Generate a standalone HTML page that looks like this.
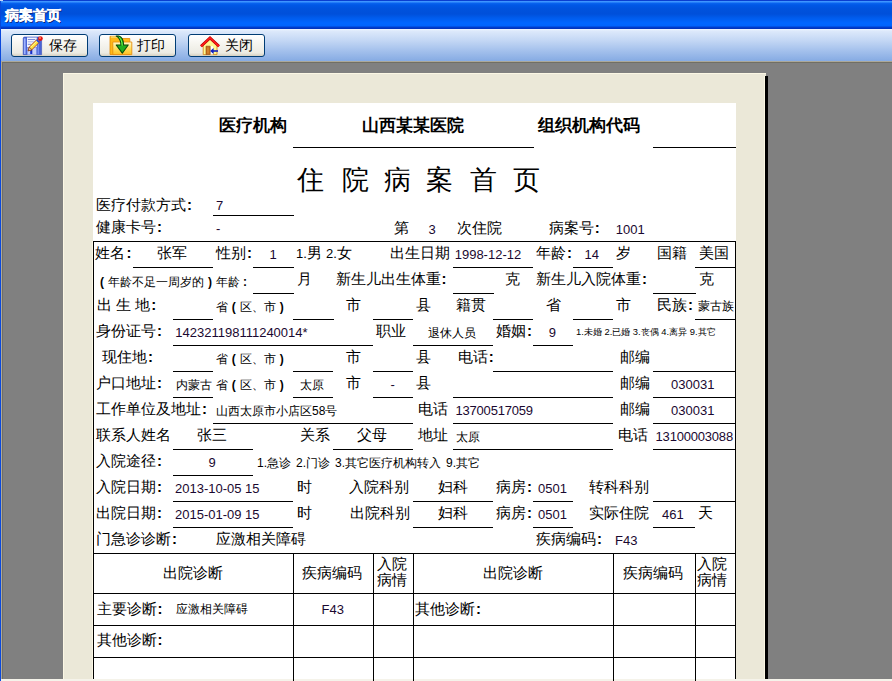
<!DOCTYPE html>
<html><head><meta charset="utf-8"><title>病案首页</title>
<style>
html,body{margin:0;padding:0;}
body{width:892px;height:681px;overflow:hidden;position:relative;background:#808080;font-family:"Liberation Sans",sans-serif;}
.a{position:absolute;}
.t{position:absolute;white-space:nowrap;font-family:"Liberation Sans",sans-serif;}
.hl{position:absolute;height:1px;background:#000;}
.vl{position:absolute;width:1px;background:#000;}
.c{font-family:"Liberation Sans",sans-serif;font-weight:bold;}
.p{display:inline-block;width:1em;text-align:center;font-family:"Liberation Sans",sans-serif;font-weight:bold;}
#title{left:0;top:0;width:892px;height:29px;background:linear-gradient(to bottom,#0a3ed0 0px,#0a3ed0 1px,#3d95ff 1px,#3d95ff 2px,#0a64f0 3px,#0058e6 5px,#0052dc 9px,#0050da 14px,#005ced 18px,#0066ff 23px,#0064fc 26px,#0040d0 27px,#0030b8 29px);}
#ttext{left:5px;top:9px;color:#fff;font-size:13.6px;line-height:13.6px;font-weight:bold;-webkit-text-stroke:0.35px #fff;text-shadow:1px 1px 0 #0a1e6e;}
#tool{left:0;top:29px;width:892px;height:32px;background:linear-gradient(to bottom,#f0f6ff 0px,#dde9fb 2px,#c2d6f4 12px,#a3c0ec 22px,#86abe3 32px);}
.btn{position:absolute;top:34px;width:75px;height:21px;border:1px solid #003c74;border-radius:3px;background:linear-gradient(to bottom,#ffffff 0%,#f6f5f0 40%,#ecebe3 85%,#d6d0c0 100%);}
.btxt{position:absolute;top:38px;font-size:14px;line-height:14px;color:#000;white-space:nowrap;}
</style></head><body>
<div class="a" id="title"></div>
<div class="a" style="left:0;top:0;width:3px;height:1px;background:#c4d6f6"></div>
<div class="a" style="left:0;top:0;width:1px;height:2px;background:#c4d6f6"></div>
<div class="a" style="left:0;top:1px;width:1px;height:28px;background:#0848d8"></div>
<div class="a" id="ttext">病案首页</div>
<div class="a" id="tool"></div>
<div class="a" style="left:0;top:29px;width:1px;height:652px;background:#0a48dc"></div>
<div class="a" style="left:1px;top:61px;width:891px;height:1px;background:#aca899"></div>
<div class="a" style="left:1px;top:61px;width:1px;height:620px;background:#aca899"></div>
<div class="a" style="left:2px;top:62px;width:890px;height:1px;background:#716f64"></div>
<div class="a" style="left:2px;top:62px;width:1px;height:617px;background:#716f64"></div>
<div class="a" style="left:1px;top:679px;width:891px;height:2px;background:#f5f3ea"></div>
<div class="btn" style="left:11px"></div>
<div class="btn" style="left:99px"></div>
<div class="btn" style="left:188px"></div>
<svg class="a" style="left:22px;top:35px" width="22" height="22" viewBox="0 0 22 22">
<path d="M1.2 3.4 Q1.2 2 2.6 2 L17.6 2 L19.6 4 L19.6 19.7 L1.2 19.7 Z" fill="#4a64d4" stroke="#3a50b8" stroke-width=".6"/>
<rect x="2" y="3.4" width="1.6" height="15.6" fill="#9cb2ff"/>
<rect x="15.6" y="5" width="1.3" height="14.2" fill="#7a92f0"/>
<rect x="5" y="2.5" width="9.8" height="9.6" fill="#f2f4ff"/>
<rect x="5.8" y="4" width="7.5" height="1" fill="#7c8cd8"/>
<rect x="5.8" y="6.3" width="6" height="1" fill="#a8b4e4"/>
<rect x="5.8" y="8.8" width="3.5" height="1" fill="#7c8cd8"/>
<rect x="5.4" y="12.4" width="9" height="7.3" fill="#c4d0f8"/>
<rect x="8.2" y="14.8" width="2.1" height="4.2" fill="#1830c8"/>
<path d="M6.2 15.8 L7.3 12.1 L14.9 4.5 L17.5 7.1 L9.9 14.7 Z" fill="#ffe640" stroke="#b03a10" stroke-width=".9" stroke-linejoin="round"/>
<path d="M8.3 12.6 L15.4 5.5" stroke="#fff6a8" stroke-width=".9"/>
<path d="M6.2 15.8 L7.3 12.1 L9.9 14.7 Z" fill="#f4d8a8" stroke="#7a3410" stroke-width=".7" stroke-linejoin="round"/>
<path d="M14.6 4.9 L17.1 7.4" stroke="#2848d8" stroke-width="1.5"/>
<circle cx="18.4" cy="3.6" r="2.4" fill="#e41414"/>
<circle cx="18" cy="3" r=".9" fill="#ff9868"/>
</svg><svg class="a" style="left:108px;top:35px" width="26" height="22" viewBox="0 0 26 22">
<defs><linearGradient id="ff" x1="0" y1="0" x2="0" y2="1"><stop offset="0" stop-color="#fffbd0"/><stop offset=".5" stop-color="#ffe060"/><stop offset="1" stop-color="#ffc020"/></linearGradient></defs>
<path d="M2 1.3 L11.5 1.3 L13.5 3.5 L21.8 3.5 L21.8 19.5 L2 19.5 Z" fill="#ffb818" stroke="#e08808" stroke-width=".8"/>
<path d="M2.8 2 L10.5 2 L12 3.8" stroke="#fff0a0" stroke-width="1" fill="none"/>
<path d="M4.8 7 L23.8 7 L23.8 19.6 L4.8 19.6 Z" fill="url(#ff)" stroke="#e89010" stroke-width=".9"/>
<path d="M8.2 1 Q12.8 3.2 13 10 L8.2 10 L14.3 18.2 L20.2 10 L15.6 10 Q15.4 2 10.6 1 Z" fill="#20b020" stroke="#0a4a0a" stroke-width="1.1" stroke-linejoin="round"/>
<path d="M10.8 2 Q13.8 4 14.2 10.5" stroke="#70ff50" stroke-width="1" fill="none"/>
</svg><svg class="a" style="left:196px;top:34px" width="28" height="24" viewBox="0 0 28 24">
<path d="M7.2 11 L7.2 20.6 L21 20.6 L21 11 L14 5 Z" fill="#fff890" stroke="#d88a20" stroke-width=".9"/>
<rect x="10.2" y="12.2" width="6.8" height="8.3" fill="#fff"/>
<path d="M10 12.2 L14.2 12.2 L14.2 20.5 L10 20.5 Z" fill="#c8701a" stroke="#8a4a10" stroke-width=".6"/>
<path d="M12 13.5 L12 19.5" stroke="#e8a050" stroke-width=".7"/>
<path d="M5 12.3 L14 3.9 L23 12.3" fill="none" stroke="#b00000" stroke-width="2.8" stroke-linejoin="miter" stroke-linecap="butt"/>
<path d="M5 12.3 L14 3.9 L23 12.3" fill="none" stroke="#ff1a1a" stroke-width="1.7" stroke-linejoin="miter" stroke-linecap="butt"/>
<path d="M22 17 L17 17" stroke="#1020c0" stroke-width="1.6"/>
<path d="M14.2 17 L17.6 14 L17.6 20 Z" fill="#1020c0"/>
</svg>
<div class="btxt" style="left:49px">保存</div>
<div class="btxt" style="left:137px">打印</div>
<div class="btxt" style="left:225px">关闭</div>
<!-- page -->
<div class="a" style="left:63px;top:73px;width:703px;height:606px;background:#ebe8d8;"></div>
<div class="a" style="left:63px;top:73px;width:703px;height:1px;background:#fbf7e4;"></div>
<div class="a" style="left:63px;top:73px;width:1px;height:606px;background:#fbf7e4;"></div>
<div class="a" style="left:764px;top:76px;width:1px;height:603px;background:#fbf7e4;"></div>
<div class="a" style="left:765px;top:76px;width:3px;height:603px;background:#000;"></div>
<div class="a" style="left:92px;top:241px;width:1px;height:438px;background:#fbf7e4;"></div>
<div class="a" style="left:93px;top:103px;width:643px;height:576px;background:#fff;"></div>
<div class="a" style="left:93px;top:241px;width:643px;height:1px;background:#000;"></div>
<div class="a" style="left:93px;top:241px;width:1px;height:438px;background:#000;"></div>
<div class="a" style="left:735px;top:241px;width:1px;height:438px;background:#000;"></div>
<div class="t" style="left:219.0px;top:117.0px;font-size:16.5px;line-height:16.5px;color:#000;font-weight:bold;">医疗机构</div>
<div class="t" style="left:361.6px;top:117.0px;font-size:16.5px;line-height:16.5px;color:#000;font-weight:bold;">山西某某医院</div>
<div class="t" style="left:537.6px;top:117.0px;font-size:16.5px;line-height:16.5px;color:#000;font-weight:bold;">组织机构代码</div>
<div class="hl" style="left:293px;top:147px;width:241px"></div>
<div class="hl" style="left:653px;top:147px;width:83px"></div>
<div class="t" style="left:297.0px;top:167.0px;font-size:27px;line-height:27px;color:#000;font-family:"Liberation Serif",serif;">住</div>
<div class="t" style="left:342.0px;top:167.0px;font-size:27px;line-height:27px;color:#000;font-family:"Liberation Serif",serif;">院</div>
<div class="t" style="left:384.0px;top:167.0px;font-size:27px;line-height:27px;color:#000;font-family:"Liberation Serif",serif;">病</div>
<div class="t" style="left:426.0px;top:167.0px;font-size:27px;line-height:27px;color:#000;font-family:"Liberation Serif",serif;">案</div>
<div class="t" style="left:470.0px;top:167.0px;font-size:27px;line-height:27px;color:#000;font-family:"Liberation Serif",serif;">首</div>
<div class="t" style="left:513.0px;top:167.0px;font-size:27px;line-height:27px;color:#000;font-family:"Liberation Serif",serif;">页</div>
<div class="t" style="left:96.0px;top:196.6px;font-size:15px;line-height:15px;color:#000;">医疗付款方式<b class="c" style="margin-left:1px">:</b></div>
<div class="t" style="left:216.0px;top:199.0px;font-size:13px;line-height:13px;color:#1a0830;">7</div>
<div class="hl" style="left:213px;top:215px;width:81px"></div>
<div class="t" style="left:96.0px;top:219.0px;font-size:15px;line-height:15px;color:#000;">健康卡号<b class="c" style="margin-left:1px">:</b></div>
<div class="t" style="left:216.0px;top:222.0px;font-size:13px;line-height:13px;color:#1a0830;">-</div>
<div class="t" style="left:394.0px;top:219.6px;font-size:15px;line-height:15px;color:#000;">第</div>
<div class="t" style="left:428.5px;top:222.5px;font-size:13px;line-height:13px;color:#1a0830;">3</div>
<div class="t" style="left:456.6px;top:219.6px;font-size:15px;line-height:15px;color:#000;">次住院</div>
<div class="t" style="left:548.7px;top:219.6px;font-size:15px;line-height:15px;color:#000;">病案号<b class="c" style="margin-left:1px">:</b></div>
<div class="t" style="left:615.7px;top:222.5px;font-size:13px;line-height:13px;color:#1a0830;">1001</div>
<div class="t" style="left:95.4px;top:245.0px;font-size:15px;line-height:15px;color:#000;">姓名<b class="c" style="margin-left:1px">:</b></div>
<div class="t" style="left:157.0px;top:245.0px;font-size:15px;line-height:15px;color:#000;">张军</div>
<div class="t" style="left:216.0px;top:245.0px;font-size:15px;line-height:15px;color:#000;">性别<b class="c" style="margin-left:1px">:</b></div>
<div class="t" style="left:269.5px;top:248.0px;font-size:13px;line-height:13px;color:#1a0830;">1</div>
<div class="t" style="left:296.0px;top:245.0px;font-size:15px;line-height:15px;color:#000;"><span style="font-size:13px">1.</span>男 <span style="font-size:13px">2.</span>女</div>
<div class="t" style="left:390.0px;top:245.0px;font-size:15px;line-height:15px;color:#000;">出生日期</div>
<div class="t" style="left:454.7px;top:248.0px;font-size:13px;line-height:13px;color:#1a0830;">1998-12-12</div>
<div class="t" style="left:536.0px;top:245.0px;font-size:15px;line-height:15px;color:#000;">年龄<b class="c" style="margin-left:1px">:</b></div>
<div class="t" style="left:584.5px;top:248.0px;font-size:13px;line-height:13px;color:#1a0830;">14</div>
<div class="t" style="left:616.0px;top:245.0px;font-size:15px;line-height:15px;color:#000;">岁</div>
<div class="t" style="left:656.6px;top:245.0px;font-size:15px;line-height:15px;color:#000;">国籍</div>
<div class="t" style="left:699.0px;top:245.0px;font-size:15px;line-height:15px;color:#000;">美国</div>
<div class="hl" style="left:133px;top:267px;width:80px"></div>
<div class="hl" style="left:253px;top:267px;width:41px"></div>
<div class="hl" style="left:453px;top:267px;width:80px"></div>
<div class="hl" style="left:573px;top:267px;width:40px"></div>
<div class="hl" style="left:695px;top:267px;width:40px"></div>
<div class="t" style="left:96.0px;top:276.0px;font-size:12px;line-height:12px;color:#000;"><b class="p">(</b>年龄不足一周岁的<b class="p">)</b>年龄<b class="c" style="margin-left:3px">:</b></div>
<div class="t" style="left:296.7px;top:271.0px;font-size:15px;line-height:15px;color:#000;">月</div>
<div class="t" style="left:335.6px;top:271.0px;font-size:15px;line-height:15px;color:#000;">新生儿出生体重<b class="c" style="margin-left:1px">:</b></div>
<div class="t" style="left:504.6px;top:271.0px;font-size:15px;line-height:15px;color:#000;">克</div>
<div class="t" style="left:536.0px;top:271.0px;font-size:15px;line-height:15px;color:#000;">新生儿入院体重<b class="c" style="margin-left:1px">:</b></div>
<div class="t" style="left:699.0px;top:271.0px;font-size:15px;line-height:15px;color:#000;">克</div>
<div class="hl" style="left:253px;top:293px;width:41px"></div>
<div class="hl" style="left:453px;top:293px;width:41px"></div>
<div class="hl" style="left:653px;top:293px;width:43px"></div>
<div class="t" style="left:97.0px;top:297.0px;font-size:15px;line-height:15px;color:#000;">出 生 地<b class="c" style="margin-left:1px">:</b></div>
<div class="t" style="left:215.8px;top:301.0px;font-size:12px;line-height:12px;color:#000;">省<b class="p">(</b>区、市<b class="p">)</b></div>
<div class="t" style="left:345.5px;top:297.0px;font-size:15px;line-height:15px;color:#000;">市</div>
<div class="t" style="left:416.0px;top:297.0px;font-size:15px;line-height:15px;color:#000;">县</div>
<div class="t" style="left:455.7px;top:297.0px;font-size:15px;line-height:15px;color:#000;">籍贯</div>
<div class="t" style="left:546.0px;top:297.0px;font-size:15px;line-height:15px;color:#000;">省</div>
<div class="t" style="left:616.0px;top:297.0px;font-size:15px;line-height:15px;color:#000;">市</div>
<div class="t" style="left:657.0px;top:297.0px;font-size:15px;line-height:15px;color:#000;">民族<b class="c" style="margin-left:1px">:</b></div>
<div class="t" style="left:697.7px;top:300.0px;font-size:12px;line-height:12px;color:#000;">蒙古族</div>
<div class="hl" style="left:173px;top:319px;width:40px"></div>
<div class="hl" style="left:293px;top:319px;width:41px"></div>
<div class="hl" style="left:373px;top:319px;width:40px"></div>
<div class="hl" style="left:493px;top:319px;width:40px"></div>
<div class="hl" style="left:573px;top:319px;width:40px"></div>
<div class="hl" style="left:695px;top:319px;width:40px"></div>
<div class="t" style="left:96.0px;top:323.0px;font-size:15px;line-height:15px;color:#000;">身份证号<b class="c" style="margin-left:1px">:</b></div>
<div class="t" style="left:175.3px;top:326.0px;font-size:13px;line-height:13px;color:#1a0830;">142321198111240014*</div>
<div class="t" style="left:375.8px;top:323.0px;font-size:15px;line-height:15px;color:#000;">职业</div>
<div class="t" style="left:428.0px;top:327.0px;font-size:12px;line-height:12px;color:#000;">退休人员</div>
<div class="t" style="left:496.0px;top:323.0px;font-size:15px;line-height:15px;color:#000;">婚姻<b class="c" style="margin-left:1px">:</b></div>
<div class="t" style="left:548.8px;top:326.0px;font-size:13px;line-height:13px;color:#1a0830;">9</div>
<div class="t" style="left:576.0px;top:327.0px;font-size:9.4px;line-height:9.4px;color:#000;">1.未婚 2.已婚 3.丧偶 4.离异 9.其它</div>
<div class="hl" style="left:173px;top:345px;width:200px"></div>
<div class="hl" style="left:413px;top:345px;width:80px"></div>
<div class="hl" style="left:533px;top:345px;width:40px"></div>
<div class="t" style="left:102.0px;top:349.0px;font-size:15px;line-height:15px;color:#000;">现住地<b class="c" style="margin-left:1px">:</b></div>
<div class="t" style="left:215.8px;top:353.0px;font-size:12px;line-height:12px;color:#000;">省<b class="p">(</b>区、市<b class="p">)</b></div>
<div class="t" style="left:345.5px;top:349.0px;font-size:15px;line-height:15px;color:#000;">市</div>
<div class="t" style="left:416.0px;top:349.0px;font-size:15px;line-height:15px;color:#000;">县</div>
<div class="t" style="left:457.7px;top:349.0px;font-size:15px;line-height:15px;color:#000;">电话<b class="c" style="margin-left:1px">:</b></div>
<div class="t" style="left:619.7px;top:349.0px;font-size:15px;line-height:15px;color:#000;">邮编</div>
<div class="hl" style="left:173px;top:371px;width:40px"></div>
<div class="hl" style="left:293px;top:371px;width:40px"></div>
<div class="hl" style="left:373px;top:371px;width:40px"></div>
<div class="hl" style="left:493px;top:371px;width:120px"></div>
<div class="hl" style="left:653px;top:371px;width:82px"></div>
<div class="t" style="left:96.0px;top:375.0px;font-size:15px;line-height:15px;color:#000;">户口地址<b class="c" style="margin-left:1px">:</b></div>
<div class="t" style="left:176.3px;top:379.0px;font-size:12px;line-height:12px;color:#000;">内蒙古</div>
<div class="t" style="left:215.8px;top:379.0px;font-size:12px;line-height:12px;color:#000;">省<b class="p">(</b>区、市<b class="p">)</b></div>
<div class="t" style="left:300.0px;top:379.0px;font-size:12px;line-height:12px;color:#000;">太原</div>
<div class="t" style="left:345.5px;top:375.0px;font-size:15px;line-height:15px;color:#000;">市</div>
<div class="t" style="left:390.6px;top:378.0px;font-size:13px;line-height:13px;color:#1a0830;">-</div>
<div class="t" style="left:416.0px;top:375.0px;font-size:15px;line-height:15px;color:#000;">县</div>
<div class="t" style="left:619.7px;top:375.0px;font-size:15px;line-height:15px;color:#000;">邮编</div>
<div class="t" style="left:671.0px;top:378.0px;font-size:13px;line-height:13px;color:#1a0830;">030031</div>
<div class="hl" style="left:173px;top:397px;width:40px"></div>
<div class="hl" style="left:293px;top:397px;width:40px"></div>
<div class="hl" style="left:373px;top:397px;width:40px"></div>
<div class="hl" style="left:453px;top:397px;width:160px"></div>
<div class="hl" style="left:653px;top:397px;width:82px"></div>
<div class="t" style="left:96.0px;top:401.0px;font-size:15px;line-height:15px;color:#000;">工作单位及地址<b class="c" style="margin-left:1px">:</b></div>
<div class="t" style="left:216.0px;top:405.0px;font-size:12px;line-height:12px;color:#000;">山西太原市小店区<span style="font-size:12px">58</span>号</div>
<div class="t" style="left:418.0px;top:401.0px;font-size:15px;line-height:15px;color:#000;">电话</div>
<div class="t" style="left:455.5px;top:404.0px;font-size:13px;line-height:13px;color:#1a0830;letter-spacing:-0.2px;">13700517059</div>
<div class="t" style="left:619.7px;top:401.0px;font-size:15px;line-height:15px;color:#000;">邮编</div>
<div class="t" style="left:671.0px;top:404.0px;font-size:13px;line-height:13px;color:#1a0830;">030031</div>
<div class="hl" style="left:213px;top:423px;width:200px"></div>
<div class="hl" style="left:453px;top:423px;width:160px"></div>
<div class="hl" style="left:653px;top:423px;width:82px"></div>
<div class="t" style="left:96.0px;top:427.0px;font-size:15px;line-height:15px;color:#000;">联系人姓名</div>
<div class="t" style="left:197.0px;top:427.0px;font-size:15px;line-height:15px;color:#000;">张三</div>
<div class="t" style="left:300.0px;top:427.0px;font-size:15px;line-height:15px;color:#000;">关系</div>
<div class="t" style="left:357.0px;top:427.0px;font-size:15px;line-height:15px;color:#000;">父母</div>
<div class="t" style="left:418.0px;top:427.0px;font-size:15px;line-height:15px;color:#000;">地址</div>
<div class="t" style="left:455.7px;top:431.0px;font-size:12px;line-height:12px;color:#000;">太原</div>
<div class="t" style="left:618.0px;top:427.0px;font-size:15px;line-height:15px;color:#000;">电话</div>
<div class="t" style="left:655.6px;top:430.0px;font-size:13px;line-height:13px;color:#1a0830;letter-spacing:-0.2px;">13100003088</div>
<div class="hl" style="left:173px;top:449px;width:80px"></div>
<div class="hl" style="left:333px;top:449px;width:80px"></div>
<div class="hl" style="left:453px;top:449px;width:160px"></div>
<div class="hl" style="left:653px;top:449px;width:82px"></div>
<div class="t" style="left:96.0px;top:453.0px;font-size:15px;line-height:15px;color:#000;">入院途径<b class="c" style="margin-left:1px">:</b></div>
<div class="t" style="left:208.6px;top:456.0px;font-size:13px;line-height:13px;color:#1a0830;">9</div>
<div class="t" style="left:257.0px;top:457.0px;font-size:12px;line-height:12px;color:#000;"><span style="font-size:12px">1.</span>急诊<span style="display:inline-block;width:5px"></span><span style="font-size:12px">2.</span>门诊<span style="display:inline-block;width:5px"></span><span style="font-size:12px">3.</span>其它医疗机构转入<span style="display:inline-block;width:5px"></span><span style="font-size:12px">9.</span>其它</div>
<div class="hl" style="left:173px;top:475px;width:80px"></div>
<div class="t" style="left:96.0px;top:479.0px;font-size:15px;line-height:15px;color:#000;">入院日期<b class="c" style="margin-left:1px">:</b></div>
<div class="t" style="left:175.0px;top:482.0px;font-size:13px;line-height:13px;color:#1a0830;">2013-10-05 15</div>
<div class="t" style="left:296.7px;top:479.0px;font-size:15px;line-height:15px;color:#000;">时</div>
<div class="t" style="left:349.0px;top:479.0px;font-size:15px;line-height:15px;color:#000;">入院科别</div>
<div class="t" style="left:437.5px;top:479.0px;font-size:15px;line-height:15px;color:#000;">妇科</div>
<div class="t" style="left:496.0px;top:479.0px;font-size:15px;line-height:15px;color:#000;">病房<b class="c" style="margin-left:1px">:</b></div>
<div class="t" style="left:538.0px;top:482.0px;font-size:13px;line-height:13px;color:#1a0830;">0501</div>
<div class="t" style="left:588.8px;top:479.0px;font-size:15px;line-height:15px;color:#000;">转科科别</div>
<div class="hl" style="left:173px;top:501px;width:120px"></div>
<div class="hl" style="left:413px;top:501px;width:80px"></div>
<div class="hl" style="left:533px;top:501px;width:40px"></div>
<div class="hl" style="left:653px;top:501px;width:82px"></div>
<div class="t" style="left:96.0px;top:505.0px;font-size:15px;line-height:15px;color:#000;">出院日期<b class="c" style="margin-left:1px">:</b></div>
<div class="t" style="left:175.0px;top:508.0px;font-size:13px;line-height:13px;color:#1a0830;">2015-01-09 15</div>
<div class="t" style="left:296.7px;top:505.0px;font-size:15px;line-height:15px;color:#000;">时</div>
<div class="t" style="left:350.4px;top:505.0px;font-size:15px;line-height:15px;color:#000;">出院科别</div>
<div class="t" style="left:437.5px;top:505.0px;font-size:15px;line-height:15px;color:#000;">妇科</div>
<div class="t" style="left:496.0px;top:505.0px;font-size:15px;line-height:15px;color:#000;">病房<b class="c" style="margin-left:1px">:</b></div>
<div class="t" style="left:538.0px;top:508.0px;font-size:13px;line-height:13px;color:#1a0830;">0501</div>
<div class="t" style="left:589.0px;top:505.0px;font-size:15px;line-height:15px;color:#000;">实际住院</div>
<div class="t" style="left:662.0px;top:508.0px;font-size:13px;line-height:13px;color:#1a0830;">461</div>
<div class="t" style="left:697.7px;top:505.0px;font-size:15px;line-height:15px;color:#000;">天</div>
<div class="hl" style="left:173px;top:527px;width:120px"></div>
<div class="hl" style="left:413px;top:527px;width:80px"></div>
<div class="hl" style="left:533px;top:527px;width:40px"></div>
<div class="hl" style="left:653px;top:527px;width:42px"></div>
<div class="t" style="left:96.0px;top:531.0px;font-size:15px;line-height:15px;color:#000;">门急诊诊断<b class="c" style="margin-left:1px">:</b></div>
<div class="t" style="left:216.0px;top:531.0px;font-size:15px;line-height:15px;color:#000;">应激相关障碍</div>
<div class="t" style="left:536.0px;top:531.0px;font-size:15px;line-height:15px;color:#000;">疾病编码<b class="c" style="margin-left:1px">:</b></div>
<div class="t" style="left:615.0px;top:534.0px;font-size:13px;line-height:13px;color:#1a0830;">F43</div>
<div class="hl" style="left:93px;top:553px;width:643px"></div>
<div class="hl" style="left:93px;top:593px;width:643px"></div>
<div class="hl" style="left:93px;top:625px;width:643px"></div>
<div class="hl" style="left:93px;top:657px;width:643px"></div>
<div class="vl" style="left:293px;top:553px;height:128px"></div>
<div class="vl" style="left:373px;top:553px;height:128px"></div>
<div class="vl" style="left:413px;top:553px;height:128px"></div>
<div class="vl" style="left:613px;top:553px;height:128px"></div>
<div class="vl" style="left:695px;top:553px;height:128px"></div>
<div class="t" style="left:163.4px;top:565.0px;font-size:15px;line-height:15px;color:#000;">出院诊断</div>
<div class="t" style="left:301.6px;top:565.0px;font-size:15px;line-height:15px;color:#000;">疾病编码</div>
<div class="t" style="left:376.8px;top:556.0px;font-size:15px;line-height:15px;color:#000;line-height:16px;">入院<br>病情</div>
<div class="t" style="left:483.0px;top:565.0px;font-size:15px;line-height:15px;color:#000;">出院诊断</div>
<div class="t" style="left:623.0px;top:565.0px;font-size:15px;line-height:15px;color:#000;">疾病编码</div>
<div class="t" style="left:697.0px;top:556.0px;font-size:15px;line-height:15px;color:#000;line-height:16px;">入院<br>病情</div>
<div class="t" style="left:96.6px;top:601.0px;font-size:15px;line-height:15px;color:#000;">主要诊断<b class="c" style="margin-left:1px">:</b></div>
<div class="t" style="left:176.0px;top:603.0px;font-size:12px;line-height:12px;color:#000;">应激相关障碍</div>
<div class="t" style="left:321.5px;top:603.0px;font-size:13px;line-height:13px;color:#1a0830;">F43</div>
<div class="t" style="left:415.0px;top:601.0px;font-size:15px;line-height:15px;color:#000;">其他诊断<b class="c" style="margin-left:1px">:</b></div>
<div class="t" style="left:96.6px;top:632.0px;font-size:15px;line-height:15px;color:#000;">其他诊断<b class="c" style="margin-left:1px">:</b></div>
</body></html>
